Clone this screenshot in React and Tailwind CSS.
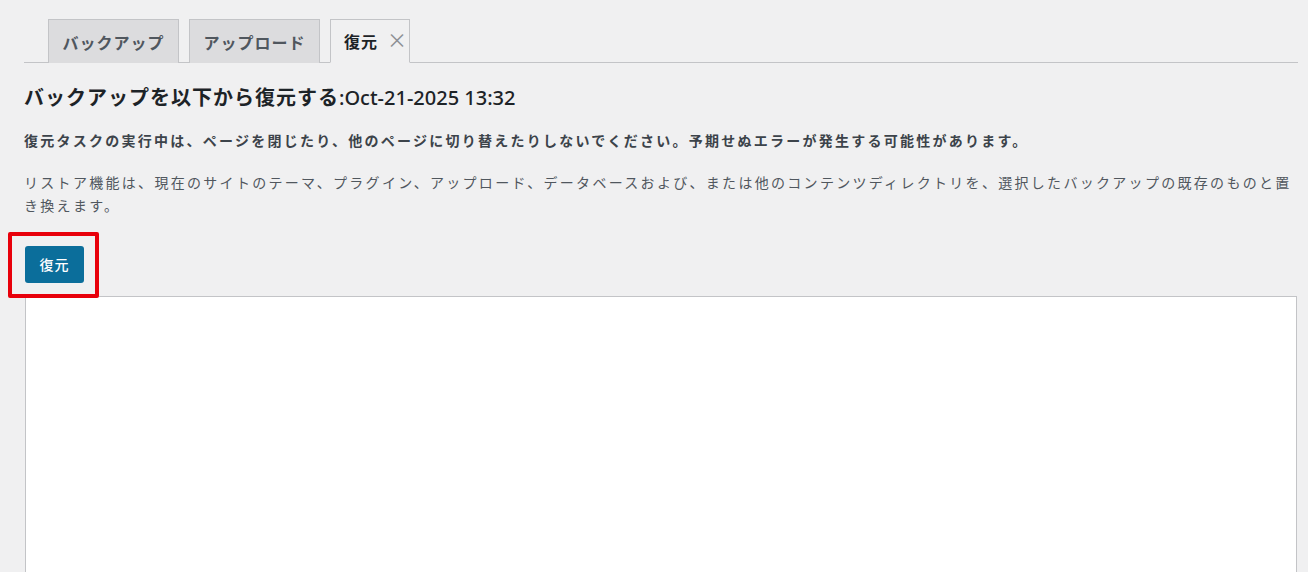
export default function App() {
  const font = { fontFamily: '"Noto Sans CJK JP", "Noto Sans", sans-serif' }

  return (
    <div className="w-[1308px] h-[572px] overflow-hidden bg-[#f0f0f1] text-[#3c434a]" style={font}>
      <div className="pl-[24px] pr-[10px] pt-[19px]">
        {/* Tabs */}
        <div className="flex items-end gap-[10px] pl-[24px] border-b border-[#c3c4c7] h-[44px]">
          <div className="h-[44px] flex items-center justify-center w-[131px] bg-[#dcdcde] border border-b-0 border-[#c3c4c7] text-[16px] font-semibold tracking-[1px] text-[#50575e] -mb-px">
            バックアップ
          </div>
          <div className="h-[44px] flex items-center justify-center w-[131px] bg-[#dcdcde] border border-b-0 border-[#c3c4c7] text-[16px] font-semibold tracking-[1px] text-[#50575e] -mb-px">
            アップロード
          </div>
          <div className="h-[44px] flex items-center gap-[9px] pl-[13px] w-[80px] whitespace-nowrap bg-[#f0f0f1] border border-[#c3c4c7] border-b-[#f0f0f1] text-[16px] font-semibold tracking-[1px] text-[#1d2327] -mb-px">
            <span>復元</span>
            <span className="text-[#8c8f94] text-[20px] font-normal leading-none -mt-[3px]">×</span>
          </div>
        </div>

        {/* Heading */}
        <h2 className="mt-[20px] text-[20px] font-semibold text-[#1d2327] leading-[28px] whitespace-nowrap">
          <span className="tracking-[1px]">バックアップを以下から復元する</span>
          <span className="font-['Noto_Sans',sans-serif] font-medium">:Oct-21-2025 13:32</span>
        </h2>

        <p className="mt-[17px] text-[14px] font-bold tracking-[2.25px] text-[#3c434a] leading-[22px]">
          復元タスクの実行中は、ページを閉じたり、他のページに切り替えたりしないでください。予期せぬエラーが発生する可能性があります。
        </p>

        <p className="mt-[20px] text-[14px] tracking-[2.3px] text-[#50575e] leading-[23px]">
          リストア機能は、現在のサイトのテーマ、プラグイン、アップロード、データベースおよび、または他のコンテンツディレクトリを、選択したバックアップの既存のものと置き換えます。
        </p>

        {/* Restore button with highlight */}
        <div className="relative mt-[29px] ml-[1px] h-[50px]">
          <button className="h-[37px] w-[59px] rounded-[3px] bg-[#0b6e9b] text-white text-[14px] font-medium tracking-[1px]">
            復元
          </button>
          <div className="absolute left-[-17px] top-[-14px] w-[91px] h-[66px] border-[4px] border-[#e8000b] rounded-[2px]" />
        </div>

        {/* Log box */}
        <div className="ml-[1px] mr-[1px] h-[300px] bg-white border border-[#c3c4c7]" />
      </div>
    </div>
  )
}
